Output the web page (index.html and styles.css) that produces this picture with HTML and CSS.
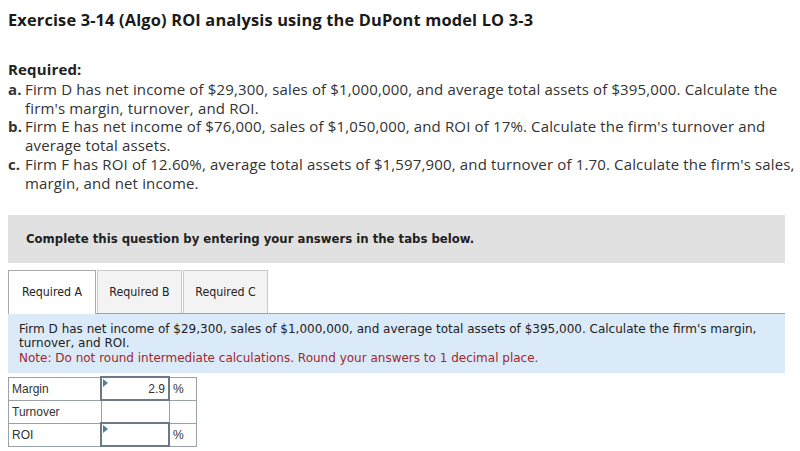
FILE: index.html
```html
<!DOCTYPE html>
<html>
<head>
<meta charset="utf-8">
<link rel="stylesheet" href="styles.css">
</head>
<body>
<h1 class="title">Exercise 3-14 (Algo) ROI analysis using the DuPont model LO 3-3</h1>
<div class="req">
  <div class="req-head">Required:</div>
  <div class="item"><span class="lbl">a.</span><span class="txt">Firm D has net income of $29,300, sales of $1,000,000, and average total assets of $395,000. Calculate the firm's margin, turnover, and ROI.</span></div>
  <div class="item"><span class="lbl">b.</span><span class="txt">Firm E has net income of $76,000, sales of $1,050,000, and ROI of 17%. Calculate the firm's turnover and average total assets.</span></div>
  <div class="item"><span class="lbl">c.</span><span class="txt">Firm F has ROI of 12.60%, average total assets of $1,597,900, and turnover of 1.70. Calculate the firm's sales, margin, and net income.</span></div>
</div>
<div class="complete">Complete this question by entering your answers in the tabs below.</div>
<div class="tabs">
  <div class="tab active">Required A</div>
  <div class="tab">Required B</div>
  <div class="tab">Required C</div>
</div>
<div class="panel">
  <div>Firm D has net income of $29,300, sales of $1,000,000, and average total assets of $395,000. Calculate the firm's margin, turnover, and ROI.</div>
  <div class="note">Note: Do not round intermediate calculations. Round your answers to 1 decimal place.</div>
</div>
<table class="grid">
  <tr><td class="name">Margin</td><td class="inp"><span class="flag"></span>2.9</td><td class="unit">%</td></tr>
  <tr><td class="name">Turnover</td><td class="inp dotted"></td><td class="unit"></td></tr>
  <tr><td class="name">ROI</td><td class="inp"><span class="flag"></span></td><td class="unit">%</td></tr>
</table>
</body>
</html>
```
FILE: styles.css
```css
html, body { margin: 0; padding: 0; background: #fff; }
body { padding: 0 0 0 8px; color: #222; font-family: "Open Sans", "Liberation Sans", sans-serif; }
.title { font-size: 16.4px; font-weight: 700; margin: 0; padding-top: 10px; line-height: 20px; color: #1a1a1a; letter-spacing: 0.15px; }
.req { margin-top: 30px; font-size: 15px; line-height: 18.8px; color: #333; letter-spacing: 0.15px; }
.req-head { font-weight: 700; color: #222; margin-bottom: 1px; }
.item { display: flex; }
.lbl { font-weight: 700; width: 17px; flex: none; }
.txt { flex: 1; }
.complete { margin: 22px 15px 0 0; background: #e1e1e1; height: 48px; display: flex; align-items: center; padding-left: 18px; font-family: "DejaVu Sans Condensed", "DejaVu Sans", sans-serif; font-weight: 700; font-size: 13px; color: #222; }
.tabs { display: flex; margin: 7px 15px 0 0; height: 43px; border-bottom: 1px solid #9aa5ad; }
.tab { width: 85px; box-sizing: border-box; border: 1px solid #c9c9c9; border-bottom: none; background: #f3f3f3; display: flex; align-items: center; justify-content: center; font-family: "DejaVu Sans Condensed", "DejaVu Sans", sans-serif; font-size: 12.3px; color: #222; margin-right: 1px; }
.tab.active { width: 88px; background: #fff; border-color: #aaa; margin-bottom: -1px; height: 44px; }
.panel { margin-right: 15px; background: #dbeaf8; padding: 8px 10px 8px 11px; font-family: "DejaVu Sans", sans-serif; font-size: 12px; line-height: 14.5px; color: #222; }
.note { color: #a0282c; }
.grid { margin-top: 3px; border-collapse: collapse; border: 1px dotted #777; font-family: "Liberation Sans", Arial, sans-serif; font-size: 12px; color: #333; }
.grid td { height: 21px; padding: 0 3px; border: 1px solid #9aa2a8; }
.name { width: 85px; }
.inp { width: 60px; text-align: right; position: relative; border: 2px solid #6d7a85 !important; padding-right: 3px !important; }
.inp.dotted { border: 1px dotted #777 !important; }
.unit { width: 20px; }
.flag { position: absolute; left: 1px; top: 1px; width: 0; height: 0; border-top: 4px solid transparent; border-bottom: 4px solid transparent; border-left: 5px solid #4f7fa8; }
```
